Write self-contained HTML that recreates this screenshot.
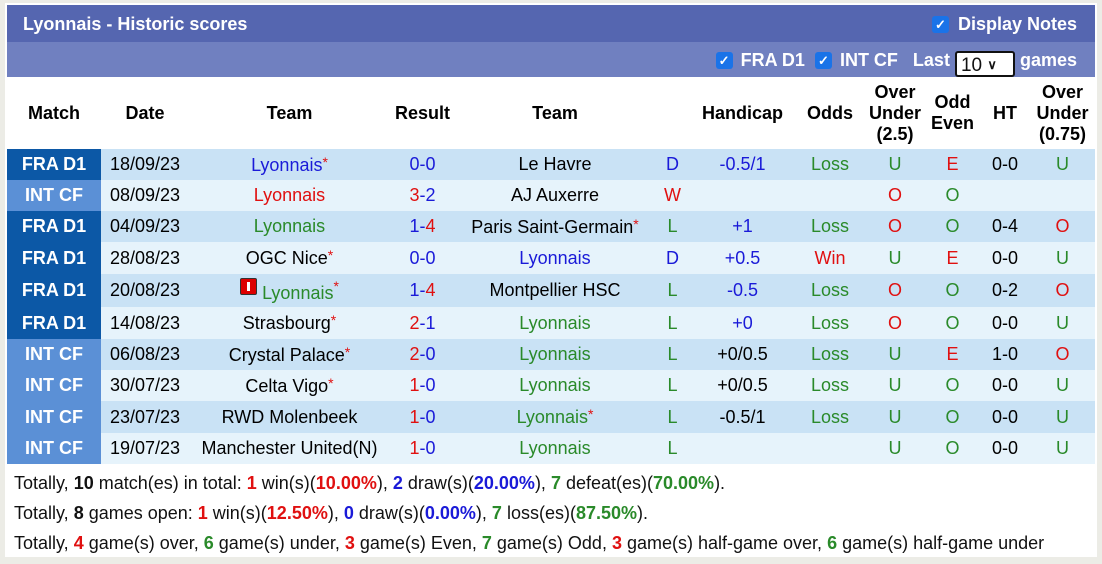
<!DOCTYPE html>
<html><head><style>
body{margin:0;background:#ecece6;font-family:"Liberation Sans",sans-serif;}
#w{position:absolute;left:5px;top:3px;width:1092px;height:554px;background:#fff;}
#t1{position:absolute;left:2px;top:2px;width:1088px;height:37px;background:#5566b0;color:#fff;font-weight:bold;font-size:18px;}
#t2{position:absolute;left:2px;top:39px;width:1088px;height:35px;background:#7080c0;color:#fff;font-weight:bold;font-size:18px;}
.cb{display:inline-block;width:17px;height:17px;background:#1a73e8;border-radius:3px;color:#fff;font-size:13px;line-height:17px;text-align:center;vertical-align:1px;margin-right:8px;}
table{position:absolute;left:2px;top:74px;border-collapse:collapse;font-size:18px;table-layout:fixed;width:1088px;}
th{font-weight:bold;height:72px;padding:0;font-size:18px;line-height:21px;}
td{padding:0;text-align:center;white-space:nowrap;}
tr.a td{background:#c9e2f5}tr.b td{background:#e6f3fb}
td.f{background:#0c58a6!important;color:#fff;font-weight:bold}
td.i{background:#5b90d6!important;color:#fff;font-weight:bold}
.bl{color:#1a1ad8}.r{color:#e01010}.g{color:#2a8a2a}.s{color:#e01010;font-size:14px;vertical-align:4px}
#sum{position:absolute;left:9px;top:465px;font-size:18px;line-height:30px;color:#111}
#sum b{font-weight:bold}
</style></head><body>
<div id="w">
<div id="t1"><span style="position:absolute;left:16px;top:9px">Lyonnais - Historic scores</span><span style="position:absolute;right:18px;top:9px"><span class="cb" style="margin-right:4px">✓</span> Display Notes</span></div>
<div id="t2"><span style="position:absolute;right:18px;top:8px"><span class="cb">✓</span>FRA D1 &nbsp;<span class="cb">✓</span>INT CF &nbsp;&nbsp;Last <span style="display:inline-block;border:2px solid #111;border-radius:3px;background:#fff;color:#111;font-weight:normal;width:60px;height:26px;line-height:23px;text-align:left;padding-left:4px;box-sizing:border-box;vertical-align:-5px;font-size:19px">10 <span style="font-size:13px;vertical-align:2px;font-weight:bold">∨</span></span> games</span></div>
<table>
<colgroup><col style="width:94px"><col style="width:88px"><col style="width:201px"><col style="width:65px"><col style="width:200px"><col style="width:35px"><col style="width:105px"><col style="width:70px"><col style="width:60px"><col style="width:55px"><col style="width:50px"><col style="width:65px"></colgroup>
<tr><th>Match</th><th>Date</th><th>Team</th><th>Result</th><th>Team</th><th></th><th>Handicap</th><th>Odds</th><th>Over<br>Under<br>(2.5)</th><th>Odd<br>Even</th><th>HT</th><th>Over<br>Under<br>(0.75)</th></tr>
<tr class="a" style="height:31px"><td class="f">FRA D1</td><td>18/09/23</td><td class="bl">Lyonnais<span class="s">*</span></td><td class="bl">0-0</td><td>Le Havre</td><td class="bl">D</td><td class="bl">-0.5/1</td><td class="g">Loss</td><td class="g">U</td><td class="r">E</td><td>0-0</td><td class="g">U</td></tr>
<tr class="b" style="height:31px"><td class="i">INT CF</td><td>08/09/23</td><td class="r">Lyonnais</td><td><span class="r">3</span><span class="bl">-2</span></td><td>AJ Auxerre</td><td class="r">W</td><td></td><td></td><td class="r">O</td><td class="g">O</td><td></td><td></td></tr>
<tr class="a" style="height:31px"><td class="f">FRA D1</td><td>04/09/23</td><td class="g">Lyonnais</td><td><span class="bl">1-</span><span class="r">4</span></td><td>Paris Saint-Germain<span class="s">*</span></td><td class="g">L</td><td class="bl">+1</td><td class="g">Loss</td><td class="r">O</td><td class="g">O</td><td>0-4</td><td class="r">O</td></tr>
<tr class="b" style="height:32px"><td class="f">FRA D1</td><td>28/08/23</td><td>OGC Nice<span class="s">*</span></td><td class="bl">0-0</td><td class="bl">Lyonnais</td><td class="bl">D</td><td class="bl">+0.5</td><td class="r">Win</td><td class="g">U</td><td class="r">E</td><td>0-0</td><td class="g">U</td></tr>
<tr class="a" style="height:33px"><td class="f">FRA D1</td><td>20/08/23</td><td><span style="display:inline-block;width:15px;height:15px;background:#d00;border:1px solid #333;border-radius:2px;vertical-align:0px;position:relative"><span style="position:absolute;left:6px;top:3px;width:3px;height:9px;background:#fff"></span></span> <span class="g" style="vertical-align:-4px">Lyonnais</span><span class="s">*</span></td><td><span class="bl">1-</span><span class="r">4</span></td><td>Montpellier HSC</td><td class="g">L</td><td class="bl">-0.5</td><td class="g">Loss</td><td class="r">O</td><td class="g">O</td><td>0-2</td><td class="r">O</td></tr>
<tr class="b" style="height:32px"><td class="f">FRA D1</td><td>14/08/23</td><td>Strasbourg<span class="s">*</span></td><td><span class="r">2</span><span class="bl">-1</span></td><td class="g">Lyonnais</td><td class="g">L</td><td class="bl">+0</td><td class="g">Loss</td><td class="r">O</td><td class="g">O</td><td>0-0</td><td class="g">U</td></tr>
<tr class="a" style="height:31px"><td class="i">INT CF</td><td>06/08/23</td><td>Crystal Palace<span class="s">*</span></td><td><span class="r">2</span><span class="bl">-0</span></td><td class="g">Lyonnais</td><td class="g">L</td><td>+0/0.5</td><td class="g">Loss</td><td class="g">U</td><td class="r">E</td><td>1-0</td><td class="r">O</td></tr>
<tr class="b" style="height:31px"><td class="i">INT CF</td><td>30/07/23</td><td>Celta Vigo<span class="s">*</span></td><td><span class="r">1</span><span class="bl">-0</span></td><td class="g">Lyonnais</td><td class="g">L</td><td>+0/0.5</td><td class="g">Loss</td><td class="g">U</td><td class="g">O</td><td>0-0</td><td class="g">U</td></tr>
<tr class="a" style="height:32px"><td class="i">INT CF</td><td>23/07/23</td><td>RWD Molenbeek</td><td><span class="r">1</span><span class="bl">-0</span></td><td class="g">Lyonnais<span class="s">*</span></td><td class="g">L</td><td>-0.5/1</td><td class="g">Loss</td><td class="g">U</td><td class="g">O</td><td>0-0</td><td class="g">U</td></tr>
<tr class="b" style="height:31px"><td class="i">INT CF</td><td>19/07/23</td><td>Manchester United(N)</td><td><span class="r">1</span><span class="bl">-0</span></td><td class="g">Lyonnais</td><td class="g">L</td><td></td><td></td><td class="g">U</td><td class="g">O</td><td>0-0</td><td class="g">U</td></tr>
</table>
<div id="sum">
<div>Totally, <b>10</b> match(es) in total: <b class="r">1</b> win(s)(<b class="r">10.00%</b>), <b class="bl">2</b> draw(s)(<b class="bl">20.00%</b>), <b class="g">7</b> defeat(es)(<b class="g">70.00%</b>).</div>
<div>Totally, <b>8</b> games open: <b class="r">1</b> win(s)(<b class="r">12.50%</b>), <b class="bl">0</b> draw(s)(<b class="bl">0.00%</b>), <b class="g">7</b> loss(es)(<b class="g">87.50%</b>).</div>
<div>Totally, <b class="r">4</b> game(s) over, <b class="g">6</b> game(s) under, <b class="r">3</b> game(s) Even, <b class="g">7</b> game(s) Odd, <b class="r">3</b> game(s) half-game over, <b class="g">6</b> game(s) half-game under</div>
</div>
</div>
</body></html>
